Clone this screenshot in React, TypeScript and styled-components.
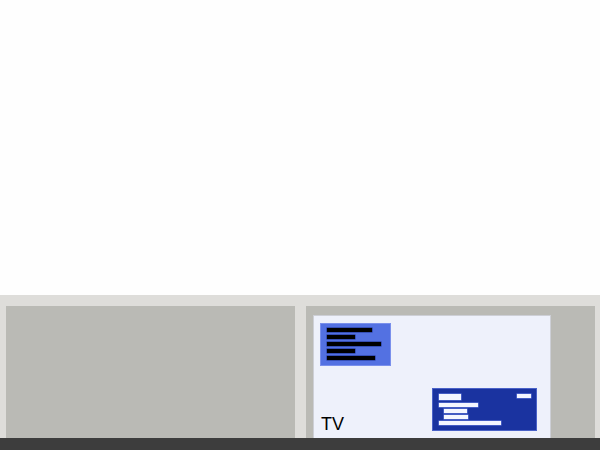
import React from "react";
import styled, { createGlobalStyle } from "styled-components";

const GlobalStyle = createGlobalStyle`
  html, body {
    margin: 0;
    padding: 0;
    background: #fefefe;
    font-family: "Liberation Sans", Arial, sans-serif;
  }
`;

const Page = styled.div`
  width: 600px;
  height: 450px;
  display: flex;
  flex-direction: column;
  overflow: hidden;
`;

const TopArea = styled.div`
  height: 295px;
  background: #fefefe;
`;

const Band = styled.div`
  height: 143px;
  background: #deddda;
  padding: 11px 5px 0 6px;
  box-sizing: border-box;
  display: grid;
  grid-template-columns: 289px 289px;
  gap: 11px;
  overflow: hidden;
`;

const Panel = styled.div`
  background: #babab5;
  padding: 9px 0 0 7px;
  box-sizing: border-box;
  min-height: 200px;
`;

const Screen = styled.div`
  position: relative;
  width: 238px;
  height: 140px;
  box-sizing: border-box;
  background: #eef1fb;
  border: 1px solid #cdcfd6;
`;

const Win = styled.div<{ $left: number; $top: number; $w: number; $h: number; $dark?: boolean }>`
  position: absolute;
  left: ${(p) => p.$left}px;
  top: ${(p) => p.$top}px;
  width: ${(p) => p.$w}px;
  height: ${(p) => p.$h}px;
  box-sizing: border-box;
  background: ${(p) => (p.$dark ? "#1a33a0" : "#5371e2")};
  border: 1px solid ${(p) => (p.$dark ? "#4a62c8" : "#7a90ec")};
`;

const TextLines = styled.div`
  display: flex;
  flex-direction: column;
  gap: 3.5px;
  padding: 4px 0 0 6px;
`;

const Line = styled.div<{ $w: number; $light?: boolean; $indent?: number; $h?: number }>`
  width: ${(p) => p.$w}px;
  height: ${(p) => p.$h ?? 3.5}px;
  margin-left: ${(p) => p.$indent ?? 0}px;
  background: ${(p) => (p.$light ? "#f4f6ff" : "#000")};
  box-shadow: 0 0 0 0.5px ${(p) => (p.$light ? "#6f86e6" : "#1b2f8a")};
`;

const DarkBody = styled.div`
  display: flex;
  flex-direction: column;
  padding: 5px 5px 0 6px;
  gap: 2.5px;
`;

const DarkHead = styled.div`
  display: flex;
  justify-content: space-between;
  align-items: flex-start;
  margin-bottom: 1px;
`;

const Label = styled.div`
  position: absolute;
  left: 7px;
  top: 99px;
  font-size: 18px;
  line-height: 18px;
  color: #000;
`;

const BottomBar = styled.div`
  height: 12px;
  background: #3d3d3d;
`;

export default function App() {
  return (
    <Page>
      <GlobalStyle />
      <TopArea />
      <Band>
        <Panel />
        <Panel>
          <Screen>
            <Win $left={6} $top={7} $w={71} $h={43}>
              <TextLines>
                <Line $w={45} />
                <Line $w={28} />
                <Line $w={54} />
                <Line $w={28} />
                <Line $w={48} />
              </TextLines>
            </Win>
            <Win $left={118} $top={72} $w={105} $h={43} $dark>
              <DarkBody>
                <DarkHead>
                  <Line $w={22} $h={5.5} $light />
                  <Line $w={14} $light />
                </DarkHead>
                <Line $w={39} $light />
                <Line $w={23} $indent={5} $light />
                <Line $w={24} $indent={5} $light />
                <Line $w={62} $light />
              </DarkBody>
            </Win>
            <Label>TV</Label>
          </Screen>
        </Panel>
      </Band>
      <BottomBar />
    </Page>
  );
}
